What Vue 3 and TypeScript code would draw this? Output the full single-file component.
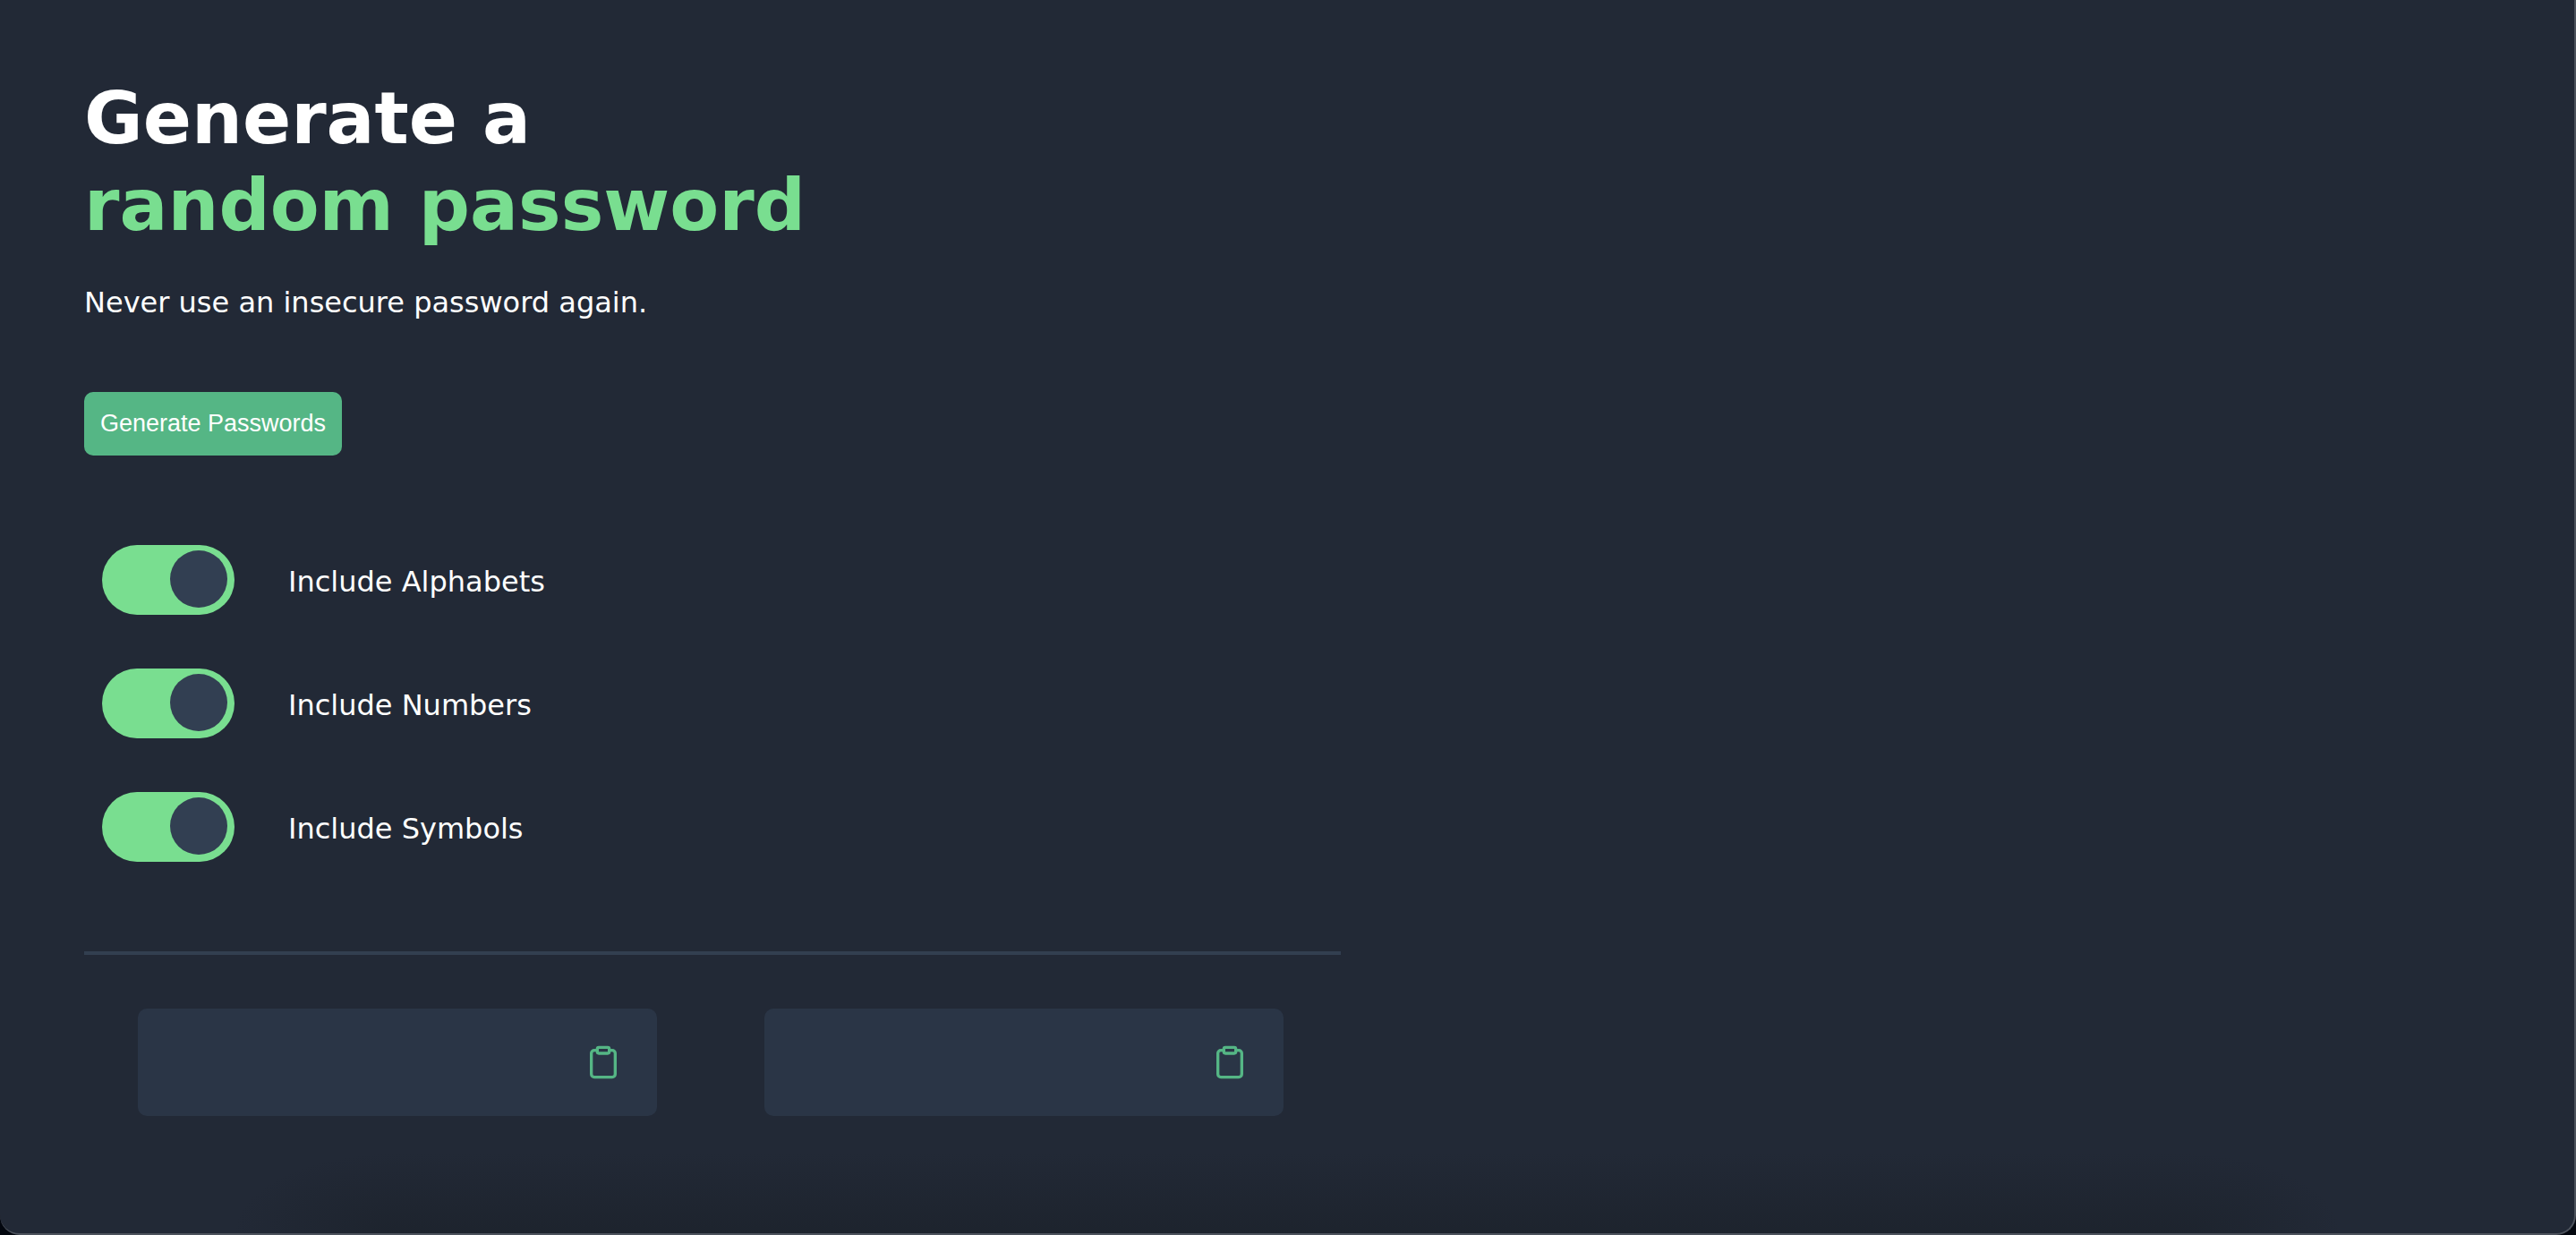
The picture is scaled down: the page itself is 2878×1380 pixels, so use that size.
<script setup lang="ts">
import { reactive, ref } from 'vue'

interface Option {
  id: string
  label: string
  charset: string
  enabled: boolean
}

const options = reactive<Option[]>([
  { id: 'alphabets', label: 'Include Alphabets', charset: 'abcdefghijklmnopqrstuvwxyzABCDEFGHIJKLMNOPQRSTUVWXYZ', enabled: true },
  { id: 'numbers', label: 'Include Numbers', charset: '0123456789', enabled: true },
  { id: 'symbols', label: 'Include Symbols', charset: '~`!@#$%^&*()_-+={[}],|:;<>.?/', enabled: true },
])

const passwords = ref<string[]>(['', ''])

function createPassword(length = 15): string {
  const pool = options.filter((o) => o.enabled).map((o) => o.charset).join('')
  if (!pool) return ''
  return Array.from({ length }, () => pool[Math.floor(Math.random() * pool.length)]).join('')
}

function generate(): void {
  passwords.value = passwords.value.map(() => createPassword())
}

function copy(text: string): void {
  if (text) navigator.clipboard?.writeText(text)
}
</script>

<template>
  <div class="window">
    <main class="page">
      <h1 class="title">Generate a<br /><span class="accent">random password</span></h1>
      <p class="subtitle">Never use an insecure password again.</p>
      <button class="generate" type="button" @click="generate">Generate Passwords</button>

      <div class="options">
        <label v-for="option in options" :key="option.id" class="option" :for="option.id">
          <input :id="option.id" v-model="option.enabled" class="toggle" type="checkbox" />
          <span class="option-label">{{ option.label }}</span>
        </label>
      </div>

      <hr class="divider" />

      <div class="results">
        <div v-for="(password, index) in passwords" :key="index" class="result">
          <output class="password">{{ password }}</output>
          <button class="copy" type="button" aria-label="Copy password" @click="copy(password)">
            <svg viewBox="0 0 24 24" fill="none" stroke="currentColor" stroke-width="2" stroke-linecap="round" stroke-linejoin="round" aria-hidden="true">
              <path d="M16 4h2a2 2 0 0 1 2 2v14a2 2 0 0 1-2 2H6a2 2 0 0 1-2-2V6a2 2 0 0 1 2-2h2" />
              <rect x="8" y="2" width="8" height="4" rx="1" />
            </svg>
          </button>
        </div>
      </div>
    </main>
  </div>
</template>

<style>
body {
  margin: 0;
  background: #03070f;
}
</style>

<style scoped>
.window {
  --shade: rgba(26, 32, 40, 0.6);
  --clear: rgba(26, 32, 40, 0);
  box-sizing: border-box;
  display: flex;
  flex-direction: column;
  min-height: 100vh;
  border: solid #4c525c;
  border-width: 0 2px 2px 0;
  border-radius: 0 0 22px 22px;
  background:
    radial-gradient(farthest-side at 100% 100%, var(--shade), var(--clear)) left 260px bottom 0 / 180px 90px no-repeat,
    linear-gradient(to top, var(--shade), var(--clear)) center bottom / calc(100% - 880px) 90px no-repeat,
    radial-gradient(farthest-side at 0 100%, var(--shade), var(--clear)) right 260px bottom 0 / 180px 90px no-repeat,
    #222936;
  color: #ffffff;
  font-family: Verdana, "DejaVu Sans", sans-serif;
  font-size: 32px;
  line-height: 40px;
}

.page {
  display: flex;
  flex-direction: column;
  align-items: flex-start;
  width: 100%;
  max-width: 1404px;
  padding: 84px 94px;
}

.title {
  margin: 0;
  font-size: 80px;
  line-height: 97px;
  font-weight: 700;
}

.accent {
  color: #79de90;
}

.subtitle {
  margin: 40px 0 80px;
}

.generate {
  padding: 20px 18px;
  border: 0;
  border-radius: 10px;
  background: #55b685;
  color: #ffffff;
  font-family: Arial, "Liberation Sans", sans-serif;
  font-size: 27px;
  line-height: 31px;
  cursor: pointer;
}

.options {
  display: flex;
  flex-direction: column;
  gap: 60px;
  margin: 100px 20px;
}

.option {
  display: flex;
  align-items: center;
  gap: 60px;
  cursor: pointer;
}

.option-label {
  padding-top: 4px;
}

.toggle {
  appearance: none;
  box-sizing: border-box;
  display: flex;
  width: 148px;
  height: 78px;
  margin: 0;
  padding: 6px 8px;
  border-radius: 39px;
  background: #55606f;
  cursor: pointer;
}

.toggle::before {
  content: "";
  width: 64px;
  height: 64px;
  border-radius: 50%;
  background: #323f52;
}

.toggle:checked {
  justify-content: flex-end;
  background: #79de90;
}

.divider {
  align-self: stretch;
  height: 4px;
  margin: 0;
  border: 0;
  background: #323f50;
}

.results {
  display: flex;
  gap: 120px;
  align-self: stretch;
  padding: 60px 64px 0 60px;
}

.result {
  box-sizing: border-box;
  display: flex;
  flex: 1;
  align-items: center;
  justify-content: space-between;
  height: 120px;
  padding: 0 40px;
  border-radius: 10px;
  background: #2a3546;
}

.copy {
  display: flex;
  padding: 0;
  border: 0;
  background: none;
  color: #55b685;
  cursor: pointer;
}

.copy svg {
  width: 40px;
  height: 40px;
}
</style>
